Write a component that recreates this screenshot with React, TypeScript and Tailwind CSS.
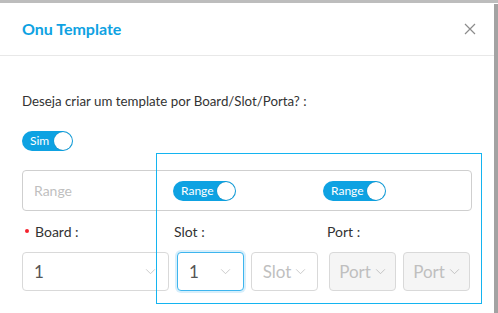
import React from 'react';

const Chevron = ({ className = '' }: { className?: string }) => (
  <svg viewBox="0 0 12 8" className={className} fill="none" stroke="currentColor" strokeWidth="1">
    <path d="M1 1.5 L6 6.5 L11 1.5" />
  </svg>
);

const Toggle = ({ label, width }: { label: string; width: string }) => (
  <div className={`flex h-[20px] ${width} items-center justify-between rounded-full bg-[#0ea2e2] pl-[8px] pr-[1px]`}>
    <span className="text-[12px] leading-none text-white">{label}</span>
    <span className="h-[18px] w-[18px] rounded-full bg-white shadow-[0_0_1px_rgba(0,0,0,0.3)]" />
  </div>
);

type SelectProps = {
  value: string;
  width: string;
  placeholder?: boolean;
  focused?: boolean;
  disabled?: boolean;
  compact?: boolean;
};

const Select = ({ value, width, placeholder, focused, disabled, compact }: SelectProps) => {
  const border = focused
    ? 'border-[#3db5ee] shadow-[0_0_0_2px_#d8effb]'
    : 'border-[#d9d9d9]';
  const bg = disabled ? 'bg-[#f5f5f5]' : 'bg-white';
  const text = placeholder || disabled ? 'text-[#bfbfbf]' : 'text-[#555]';
  return (
    <div
      className={`flex h-[39px] ${width} items-center rounded-[4px] border ${border} ${bg} ${
        compact ? 'justify-center gap-[4px]' : 'justify-between pl-[11px] pr-[12px]'
      }`}
    >
      <span className={`text-[17px] ${text}`}>{value}</span>
      <Chevron className={`h-[7px] w-[11px] ${disabled ? 'text-[#bbb]' : 'text-[#c4c4c4]'}`} />
    </div>
  );
};

export default function App() {
  return (
    <div
      className="relative h-[313px] w-[498px] overflow-hidden bg-white text-[#333]"
      style={{ fontFamily: 'Lato, "Noto Sans", sans-serif' }}
    >
      <div className="h-[3px] bg-[#bdbdbd]" />
      <div className="flex h-[310px]">
        <div className="flex-1">
          <div className="flex h-[53px] items-center justify-between border-b border-[#e8e8e8] pl-[22px] pr-[18px]">
            <h1 className="text-[16px] font-bold text-[#0ea2e2]">Onu Template</h1>
            <svg viewBox="0 0 12 12" className="h-[12px] w-[12px] text-[#8c8c8c]" fill="none" stroke="currentColor" strokeWidth="1.2">
              <path d="M1 1 L11 11 M11 1 L1 11" />
            </svg>
          </div>

          <div className="px-[22px]">
            <p className="mt-[35px] text-[13.3px] leading-[20px]">Deseja criar um template por Board/Slot/Porta? :</p>

            <div className="mt-[20px]">
              <Toggle label="Sim" width="w-[51px]" />
            </div>

            <div className="mt-[19px] flex h-[41px] items-center rounded-[4px] border border-[#cfcfcf]">
              <span className="w-[150px] pl-[11px] text-[14px] text-[#bfbfbf]">Range</span>
              <div className="w-[150px]">
                <Toggle label="Range" width="w-[63px]" />
              </div>
              <Toggle label="Range" width="w-[63px]" />
            </div>

            <div className="mt-[10px] flex h-[20px] items-center text-[14px]">
              <span className="flex w-[152px] items-center pl-[3px]">
                <span className="mr-[6px] h-[4px] w-[4px] rounded-full bg-[#f5222d]" />
                Board :
              </span>
              <span className="w-[153px]">Slot :</span>
              <span>Port :</span>
            </div>

            <div className="mt-[11px] flex items-center">
              <Select value="1" width="w-[147px]" />
              <div className="ml-[8px]">
                <Select value="1" width="w-[67px]" focused />
              </div>
              <div className="ml-[7px]">
                <Select value="Slot" width="w-[67px]" placeholder compact />
              </div>
              <div className="ml-[11px]">
                <Select value="Port" width="w-[67px]" disabled compact />
              </div>
              <div className="ml-[7px]">
                <Select value="Port" width="w-[67px]" disabled compact />
              </div>
            </div>
          </div>
        </div>
        <div className="mt-[1px] w-[4px] bg-[#a3a3a3]" />
      </div>

      <div className="absolute left-[156px] top-[153px] h-[151px] w-[326px] border border-[#14b4f0]" />
    </div>
  );
}
